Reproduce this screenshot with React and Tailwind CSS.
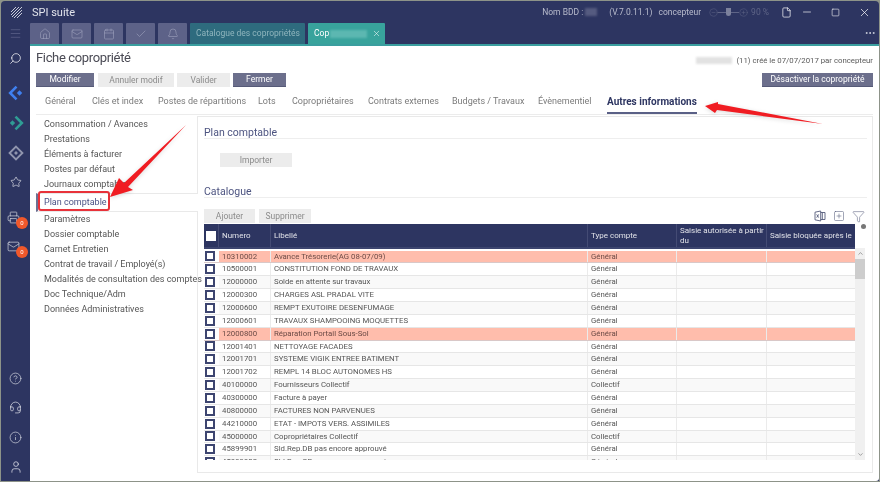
import React from 'react';
import { Home, Mail, Calendar, Check, Bell, X, Menu, Search, Star, Printer, CircleHelp, Headset, Info, User, File, Minus, Square, Filter, ChevronUp, ChevronDown, Ellipsis, CircleMinus, CirclePlus, SquarePlus } from 'lucide-react';

const font = { fontFamily: 'Roboto,"Open Sans",sans-serif' };

const rows = [
  ['10310002', 'Avance Trésorerie(AG 08-07/09)', 'Général', true],
  ['10500001', 'CONSTITUTION FOND DE TRAVAUX', 'Général'],
  ['12000000', 'Solde en attente sur travaux', 'Général'],
  ['12000300', 'CHARGES ASL PRADAL VITE', 'Général'],
  ['12000600', 'REMPT EXUTOIRE DESENFUMAGE', 'Général'],
  ['12000601', 'TRAVAUX SHAMPOOING MOQUETTES', 'Général'],
  ['12000800', 'Réparation Portail Sous-Sol', 'Général', true],
  ['12001401', 'NETTOYAGE FACADES', 'Général'],
  ['12001701', 'SYSTEME VIGIK ENTREE BATIMENT', 'Général'],
  ['12001702', 'REMPL 14 BLOC AUTONOMES HS', 'Général'],
  ['40100000', 'Fournisseurs Collectif', 'Collectif'],
  ['40300000', 'Facture à payer', 'Général'],
  ['40800000', 'FACTURES NON PARVENUES', 'Général'],
  ['44210000', 'ETAT - IMPOTS VERS. ASSIMILES', 'Général'],
  ['45000000', 'Copropriétaires Collectif', 'Collectif'],
  ['45899901', 'Sld.Rep.DB pas encore approuvé', 'Général'],
  ['45899902', 'Sld.Rep.CR pas encore approuvé', 'Général'],
];

const menuTop = ['Consommation / Avances', 'Prestations', 'Éléments à facturer', 'Postes par défaut', 'Journaux comptable'];
const menuBottom = ['Paramètres', 'Dossier comptable', 'Carnet Entretien', 'Contrat de travail / Employé(s)', 'Modalités de consultation des comptes', 'Doc Technique/Adm', 'Données Administratives'];
const tabs = [['Général', 'w-[47px]'], ['Clés et index', 'w-[66px]'], ['Postes de répartitions', 'w-[100px]'], ['Lots', 'w-[34px]'], ['Copropriétaires', 'w-[76px]'], ['Contrats externes', 'w-[84px]'], ['Budgets / Travaux', 'w-[86px]'], ['Évènementiel', 'w-[69px]']];

function NavTile({ Icon }) {
  return <div className="w-[29px] h-[21px] mr-[3px] bg-[#5d6288] flex items-center justify-center rounded-t-[1px]"><Icon size={12} strokeWidth={1.2} className="text-[#9fa3bd]" /></div>;
}

function Btn({ children, w, on }) {
  return <div className={`${w} h-[14px] flex items-center justify-center text-[8.5px] leading-none ${on ? 'bg-[#6c6f8c] text-white border-b border-[#565a78]' : 'bg-[#ececec] text-[#8b8b8b]'}`}>{children}</div>;
}

function Badge() {
  return <span className="absolute left-[15px] top-1/2 w-[12px] h-[12px] rounded-full bg-[#f0582b] text-white text-[6px] leading-[12px] text-center">0</span>;
}

function Side({ children, h = 'h-[30px]' }) {
  return <div className={`${h} w-full flex items-center justify-center relative`}>{children}</div>;
}

function Box({ dark }) {
  return <span className={`block w-[10px] h-[10px] border-2 ${dark ? 'border-white bg-white' : 'border-[#3d4570] bg-white'}`} />;
}

function Row({ r, i }) {
  const bg = r[3] ? 'bg-[#ffbdac]' : i % 2 ? 'bg-white' : 'bg-[#f9f9f9]';
  const cell = 'h-full flex items-center pl-[3px] border-r border-[#ebebeb] truncate';
  return (
    <div className={`flex h-[12.87px] shrink-0 text-[7.8px] leading-none border-b ${r[3] ? 'text-[#6b4a45] border-[#d9c8c8]' : 'text-[#555] border-[#e6e6e6]'}`}>
      <div className="w-[15px] h-full flex items-center justify-start pl-[1px] bg-white"><Box /></div>
      <div className={`${bg} ${cell} w-[52px]`}>{r[0]}</div>
      <div className={`${bg} ${cell} w-[317px]`}>{r[1]}</div>
      <div className={`${bg} ${cell} w-[89px]`}>{r[2]}</div>
      <div className={`${bg} ${cell} w-[90px]`}></div>
      <div className={`${bg} ${cell} w-[88px] border-r-0`}></div>
    </div>
  );
}

function Logo() {
  return (
    <svg width="13" height="13" viewBox="0 0 13 13" fill="none" stroke="#c7cad8" strokeWidth="1">
      <path d="M6 1 1 6M9 1 1 9M12 1 2 11M12 4 4 12M12 7 7 12" />
    </svg>
  );
}

function Diamond({ color, arrow }) {
  return (
    <svg width="16" height="16" viewBox="0 0 15 15" fill="none">
      {arrow === 'left' && <><path d="M8 1.5 2 7.5 8 13.5" stroke={color} strokeWidth="2.4" /><rect x="9" y="5.7" width="3.6" height="3.6" transform="rotate(45 10.8 7.5)" fill={color} /></>}
      {arrow === 'right' && <><path d="M7 1.5 13 7.5 7 13.5" stroke={color} strokeWidth="2.4" /><rect x="2.4" y="5.7" width="3.6" height="3.6" transform="rotate(45 4.2 7.5)" fill={color} /></>}
      {arrow === 'both' && <><path d="M7.5 1.5 13.5 7.5 7.5 13.5 1.5 7.5Z" stroke={color} strokeWidth="1.8" /><rect x="6.2" y="6.2" width="2.6" height="2.6" transform="rotate(45 7.5 7.5)" fill={color} /></>}
    </svg>
  );
}

function ExcelIcon() {
  return (
    <svg width="12" height="12" viewBox="0 0 12 12" fill="none" stroke="#555b7a" strokeWidth="0.9">
      <path d="M1 2.2 6.7 1v10L1 9.8Z" />
      <path d="M6.7 2.5H11v7H6.7M8.3 2.5v7M2.7 4.4l2 3.2M4.7 4.4l-2 3.2" />
    </svg>
  );
}

export default function App() {
  return (
    <div className="w-[880px] h-[482px] overflow-hidden bg-[#8d9389] p-px relative blur-[0.3px]" style={font}>
      <div className="w-full h-full bg-[#2d3561] flex flex-col rounded-t-[4px] overflow-hidden">
        {/* title bar */}
        <div className="h-[22px] shrink-0 flex items-center text-[#e2e4ec]">
          <div className="w-[31px] flex justify-center"><Logo /></div>
          <span className="text-[11px] leading-none">SPI suite</span>
          <div className="ml-auto flex items-center text-[8.5px] leading-none text-[#b9bccd]">
            <span>Nom BDD :</span>
            <span className="w-[12px] h-[8px] ml-[2px] bg-[#555b80] blur-[1px]" />
            <span className="ml-[12px]">(V.7.0.11.1)</span>
            <span className="ml-[6px]">concepteur</span>
            <div className="ml-[8px] flex items-center text-[#5f6587]">
              <CircleMinus size={9} strokeWidth={1.3} />
              <span className="w-[8px] h-px bg-[#5f6587]" />
              <span className="w-[5px] h-[8px] bg-[#7c819c] rounded-b-[3px]" />
              <span className="w-[8px] h-px bg-[#5f6587]" />
              <CirclePlus size={9} strokeWidth={1.3} />
              <span className="ml-[3px]">90 %</span>
            </div>
            <File size={11} strokeWidth={1.5} className="ml-[12px] text-white" />
            <Minus size={12} strokeWidth={1.3} className="ml-[9px] text-white" />
            <Square size={9} strokeWidth={1.5} className="ml-[18px] text-white" />
            <X size={13} strokeWidth={1.3} className="ml-[18px] mr-[8px] text-white" />
          </div>
        </div>
        {/* tab strip */}
        <div className="h-[21px] shrink-0 flex pl-[29px] relative">
          <NavTile Icon={Home} /><NavTile Icon={Mail} /><NavTile Icon={Calendar} /><NavTile Icon={Check} /><NavTile Icon={Bell} />
          <div className="w-[115px] h-[21px] mr-[3px] bg-[#2e6b7e] text-[#8fb5bd] text-[8.5px] leading-none flex items-center pl-[6px] gap-[7px] rounded-t-[1px]">
            <span className="whitespace-nowrap">Catalogue des copropriétés</span>
            <X size={9} strokeWidth={1.2} />
          </div>
          <div className="w-[77px] h-[21px] bg-[#38a39c] text-white text-[8.5px] leading-none flex items-center pl-[6px] rounded-t-[1px]">
            <span>Cop</span>
            <span className="w-[37px] h-[8px] ml-[1px] bg-[#5cb7b1] blur-[1px]" />
            <X size={9} strokeWidth={1.4} className="ml-[5px]" />
          </div>
          <Ellipsis size={12} className="ml-auto mt-[4px] mr-[3px] text-[#cfd2de]" />
        </div>
        <div className="h-[2px] shrink-0 bg-[#3a9e9f] ml-[29px]" />
        {/* body */}
        <div className="flex flex-1 min-h-0">
          {/* sidebar */}
          <div className="w-[29px] shrink-0 flex flex-col items-center text-[#dfe1ea] -mt-[23px] z-10">
            <Side h="h-[21px]"><Menu size={13} strokeWidth={1} className="text-[#6f7498]" /></Side>
            <Side h="h-[28px]"><Search size={13} strokeWidth={1.3} className="-scale-x-100 text-white" /></Side>
            <Side h="h-[36px]"><span className="mt-[6px]"><Diamond color="#3f80f0" arrow="left" /></span></Side>
            <Side h="h-[30px]"><Diamond color="#2f9d95" arrow="right" /></Side>
            <Side h="h-[29px]"><Diamond color="#8f94ad" arrow="both" /></Side>
            <Side h="h-[30px]"><Star size={12} strokeWidth={1.4} /></Side>
            <Side h="h-[40px]"><Printer size={13} strokeWidth={1.2} className="-ml-[4px]" /><Badge /></Side>
            <Side h="h-[18px]"><Mail size={13} strokeWidth={1.2} className="-ml-[4px]" /><Badge /></Side>
            <div className="mt-auto w-full flex flex-col">
              <Side h="h-[29px]"><CircleHelp size={13} strokeWidth={1.2} /></Side>
              <Side h="h-[29px]"><Headset size={13} strokeWidth={1.3} /></Side>
              <Side h="h-[30px]"><Info size={13} strokeWidth={1.2} /></Side>
              <Side h="h-[29px]"><User size={14} strokeWidth={1.3} /></Side>
            </div>
          </div>
          {/* main */}
          <div className="flex-1 min-w-0 bg-white rounded-br-[3px] flex flex-col px-[6px]">
            {/* header */}
            <div className="h-[27px] shrink-0 flex items-start justify-between">
              <h1 className="text-[13px] leading-[24px] tracking-[-0.35px] text-[#4b4b55] whitespace-nowrap">Fiche copropriété</h1>
              <div className="mt-[11px] flex items-center text-[7.8px] leading-none text-[#5a5a5a]">
                <span className="w-[36px] h-[7px] mr-[4px] bg-[#e2e2e2] blur-[1px]" />
                <span>(11) créé le 07/07/2017 par concepteur</span>
              </div>
            </div>
            <div className="h-[14px] shrink-0 flex">
              <Btn w="w-[58px] mr-[4px]" on>Modifier</Btn>
              <Btn w="w-[76px] mr-[3px]">Annuler modif</Btn>
              <Btn w="w-[53px] mr-[3px]">Valider</Btn>
              <Btn w="w-[53px]" on>Fermer</Btn>
              <Btn w="w-[111px] ml-auto" on>Désactiver la copropriété</Btn>
            </div>
            {/* tabs */}
            <div className="h-[28px] shrink-0 flex items-stretch text-[9px] text-[#7a7a7a] border-b border-[#ececec] pl-[9px]">
              {tabs.map(([t, w]) => (
                <div key={t} className={`${w} shrink-0 flex items-center whitespace-nowrap pt-[3px]`}>{t}</div>
              ))}
              <div className="flex items-center pt-[3px] font-bold text-[10px] text-[#2d3561] border-b-2 border-[#5a6086] -mb-px whitespace-nowrap h-[27px]">Autres informations</div>
            </div>
            {/* content */}
            <div className="flex flex-1 min-h-0 pt-[1px] pb-[8px]">
              <div className="w-[161px] shrink-0 text-[9px] text-[#555] leading-[15px] pt-[1px]">
                {menuTop.map((m) => <div key={m} className="pl-[8px] h-[15px] whitespace-nowrap">{m}</div>)}
                <div className="h-[19px] mt-[1px] pl-[6px] flex items-center border-y border-[#e9e9e9] border-l-2 border-l-[#6c7193] text-[#4a5285] -mr-px bg-white relative z-[1]">Plan comptable</div>
                {menuBottom.map((m) => <div key={m} className="pl-[8px] h-[15px] whitespace-nowrap">{m}</div>)}
              </div>
              <div className="flex-1 min-w-0 border border-[#e9e9e9] pl-[6px] pr-[5px] pt-[11px] pb-[12px] flex flex-col">
                <div className="text-[10.5px] leading-[10px] text-[#4d5480] border-b border-[#eeeeee]">Plan comptable</div>
                <div className="pl-[16px] mt-[14px]"><Btn w="w-[72px]">Importer</Btn></div>
                <div className="text-[10.5px] leading-[11px] text-[#4d5480] border-b border-[#eeeeee] mt-[19px]">Catalogue</div>
                <div className="flex mt-[11px] h-[14px] items-center">
                  <Btn w="w-[51px] mr-[4px]">Ajouter</Btn>
                  <Btn w="w-[52px]">Supprimer</Btn>
                  <div className="ml-auto flex items-center gap-[7px] mr-[2px]">
                    <ExcelIcon />
                    <SquarePlus size={12} strokeWidth={1.1} className="text-[#555b7a]" />
                    <Filter size={13} strokeWidth={1} className="text-[#555b7a]" />
                  </div>
                </div>
                {/* table */}
                <div className="mt-[1px] flex flex-1 min-h-0 overflow-hidden relative">
                  <div className="w-[651px] shrink-0 flex flex-col overflow-hidden">
                    <div className="h-[25px] shrink-0 mb-[1.5px] flex bg-[#2d3561] text-white/85 text-[8px] leading-[10px] border-b-2 border-[#3d456f]">
                      <div className="w-[15px] flex items-center justify-center border-r border-[#444b74]"><Box dark /></div>
                      <div className="w-[52px] flex items-center pl-[3px] border-r border-[#444b74]">Numero</div>
                      <div className="w-[317px] flex items-center pl-[3px] border-r border-[#444b74]">Libellé</div>
                      <div className="w-[89px] flex items-center pl-[3px] border-r border-[#444b74]">Type compte</div>
                      <div className="w-[90px] flex items-center pl-[3px] border-r border-[#444b74]">Saisie autorisée à partir du</div>
                      <div className="w-[88px] flex items-center pl-[3px]">Saisie bloquée après le</div>
                    </div>
                    {rows.map((r, i) => <Row key={r[0]} r={r} i={i} />)}
                  </div>
                  <div className="w-[10px] shrink-0 mt-[24px] bg-[#f0f0f0] flex flex-col items-center">
                    <ChevronUp size={7} className="text-[#666] mt-[2px]" />
                    <div className="w-full h-[20px] bg-[#cdcdcd] mt-[2px]" />
                    <ChevronDown size={7} className="text-[#666] mt-auto mb-[2px]" />
                  </div>
                  <span className="absolute right-[1px] top-0 w-[5px] h-[5px] rounded-full bg-[#777]" />
                </div>
              </div>
            </div>
          </div>
        </div>
      </div>
      {/* annotations */}
      <div className="absolute left-[38px] top-[191px] w-[72px] h-[20px] border-2 border-[#e8323a] rounded-[3px] pointer-events-none z-20" />
      <svg className="absolute left-0 top-0 pointer-events-none z-20 drop-shadow-sm" width="880" height="482" viewBox="0 0 880 482">
        <path d="M186 125 124 183 119 178 110 197 133 190 128 187Z" fill="#f01c22" />
        <path d="M823 124 718 104 718 102 705 106 715 113 717 110Z" fill="#f01c22" />
      </svg>
    </div>
  );
}
